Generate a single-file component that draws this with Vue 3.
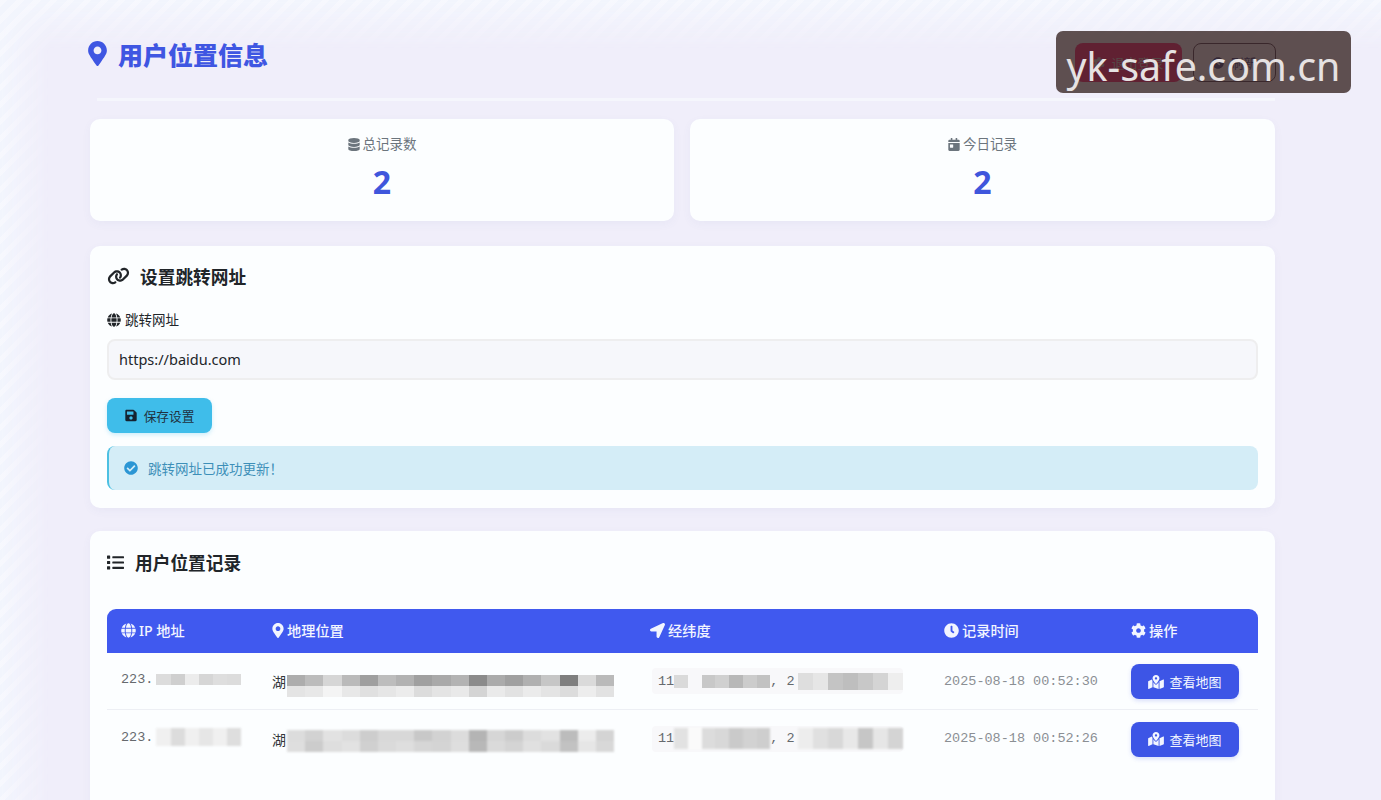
<template>
  <div class="page">
    <div class="container">
      <header class="top">
        <h1 class="title">
          <svg class="title-icon" viewBox="0 0 384 512"><path :d="icons.marker" /></svg>
          用户位置信息
        </h1>
        <div class="top-actions">
          <button class="btn-logout">
            <svg class="top-icon" viewBox="0 0 512 512"><path :d="icons.cog" /></svg>
            退出登录
          </button>
          <button class="btn-refresh">
            <svg class="top-icon" viewBox="0 0 512 512"><path :d="icons.clock" /></svg>
            刷新
          </button>
        </div>
      </header>

      <section class="stats">
        <div v-for="s in stats" :key="s.label" class="stat-card">
          <div class="stat-label">
            <svg class="stat-icon" viewBox="0 0 448 512"><path :d="s.icon" /></svg>
            {{ s.label }}
          </div>
          <div class="stat-value">{{ s.value }}</div>
        </div>
      </section>

      <section class="panel panel-form">
        <h2 class="panel-title">
          <svg class="link-icon" viewBox="0 0 640 512"><path :d="icons.link" /></svg>
          设置跳转网址
        </h2>
        <label class="field-label">
          <svg class="field-icon" viewBox="0 0 496 512"><path :d="icons.globe" /></svg>
          跳转网址
        </label>
        <input class="field-input" type="text" value="https://baidu.com" />
        <button class="btn-save">
          <svg class="save-icon" viewBox="0 0 448 512"><path :d="icons.save" /></svg>
          保存设置
        </button>
        <div class="notice">
          <svg class="notice-icon" viewBox="0 0 512 512"><path :d="icons.check" /></svg>
          跳转网址已成功更新！
        </div>
      </section>

      <section class="panel panel-table">
        <h2 class="panel-title list-title">
          <svg class="list-icon" viewBox="0 0 512 512"><path :d="icons.list" /></svg>
          用户位置记录
        </h2>
        <div class="table">
          <div class="row head">
            <div v-for="h in heads" :key="h.text" class="cell">
              <svg class="head-icon" :viewBox="h.box"><path :d="h.icon" /></svg>
              {{ h.text }}
            </div>
          </div>
          <div v-for="(r, i) in rows" :key="r.time" class="row body-row" :class="{ last: i === rows.length - 1 }">
            <div class="cell mono ip">
              <span>223.</span>
              <span class="mosaic mosaic-ip" :class="{ soft: i === 1 }">
                <i v-for="(c, j) in r.ip" :key="j" :style="{ background: c }"></i>
              </span>
            </div>
            <div class="cell place">
              <span>湖</span>
              <span class="mosaic mosaic-place" :class="{ soft: i === 1 }">
                <span class="mosaic-line">
                  <i v-for="(c, j) in r.place" :key="j" :style="{ background: c }"></i>
                </span>
                <span class="mosaic-line">
                  <i v-for="(c, j) in r.place2" :key="j" :style="{ background: c }"></i>
                </span>
              </span>
            </div>
            <div class="cell">
              <span class="coord mono">
                <span>11</span>
                <span class="mosaic mosaic-lng" :class="{ soft: i === 1 }">
                  <i v-for="(c, j) in r.lng" :key="j" :style="{ background: c }"></i>
                </span>
                <span class="coord-sep">, 2</span>
                <span class="mosaic mosaic-lat" :class="{ soft: i === 1 }">
                  <i v-for="(c, j) in r.lat" :key="j" :style="{ background: c }"></i>
                </span>
              </span>
            </div>
            <div class="cell mono time">{{ r.time }}</div>
            <div class="cell">
              <button class="btn-map">
                <svg class="map-icon" viewBox="0 0 576 512"><path :d="icons.map" /></svg>
                查看地图
              </button>
            </div>
          </div>
        </div>
      </section>
    </div>

    <div class="watermark">yk-safe.com.cn</div>
  </div>
</template>

<script setup>
const icons = {
  marker: 'M172.268 501.67C26.97 291.031 0 255.726 0 192 0 85.961 85.961 0 192 0s192 85.961 192 192c0 63.726-26.97 99.031-172.268 309.67-9.535 13.774-29.93 13.773-39.464 0zM192 272c44.183 0 80-35.817 80-80s-35.817-80-80-80-80 35.817-80 80 35.817 80 80 80z',
  database: 'M448 73.143v45.714C448 159.143 347.667 192 224 192S0 159.143 0 118.857V73.143C0 32.857 100.333 0 224 0s224 32.857 224 73.143zM448 176v102.857C448 319.143 347.667 352 224 352S0 319.143 0 278.857V176c48.125 33.143 136.208 48.572 224 48.572S399.874 209.143 448 176zm0 160v102.857C448 479.143 347.667 512 224 512S0 479.143 0 438.857V336c48.125 33.143 136.208 48.572 224 48.572S399.874 369.143 448 336z',
  calendar: 'M0 464c0 26.5 21.5 48 48 48h352c26.5 0 48-21.5 48-48V192H0v272zm64-192c0-8.8 7.2-16 16-16h96c8.8 0 16 7.2 16 16v96c0 8.8-7.2 16-16 16H80c-8.8 0-16-7.2-16-16v-96zM400 64h-48V16c0-8.8-7.2-16-16-16h-32c-8.8 0-16 7.2-16 16v48H160V16c0-8.8-7.2-16-16-16h-32c-8.8 0-16 7.2-16 16v48H48C21.5 64 0 85.5 0 112v48h448v-48c0-26.5-21.5-48-48-48z',
  link: 'M579.8 267.7c56.5-56.5 56.5-148 0-204.5c-50-50-128.8-56.5-186.3-15.4l-1.6 1.1c-14.4 10.3-17.7 30.3-7.4 44.6s30.3 17.7 44.6 7.4l1.6-1.1c32.1-22.9 76-19.3 103.8 8.6c31.5 31.5 31.5 82.5 0 114L422.3 334.8c-31.5 31.5-82.5 31.5-114 0c-27.9-27.9-31.5-71.8-8.6-103.8l1.1-1.6c10.3-14.4 6.9-34.4-7.4-44.6s-34.4-6.9-44.6 7.4l-1.1 1.6C206.5 251.2 213 330 263 380c56.5 56.5 148 56.5 204.5 0L579.8 267.7zM60.2 244.3c-56.5 56.5-56.5 148 0 204.5c50 50 128.8 56.5 186.3 15.4l1.6-1.1c14.4-10.3 17.7-30.3 7.4-44.6s-30.3-17.7-44.6-7.4l-1.6 1.1c-32.1 22.9-76 19.3-103.8-8.6C74 372 74 321 105.5 289.5L217.7 177.2c31.5-31.5 82.5-31.5 114 0c27.9 27.9 31.5 71.8 8.6 103.9l-1.1 1.6c-10.3 14.4-6.9 34.4 7.4 44.6s34.4 6.9 44.6-7.4l1.1-1.6C433.5 260.8 427 182 377 132c-56.5-56.5-148-56.5-204.5 0L60.2 244.3z',
  globe: 'M336.5 160C322 70.7 287.8 8 248 8s-74 62.7-88.5 152h177zM152 256c0 22.2 1.2 43.5 3.3 64h185.3c2.1-20.5 3.3-41.8 3.3-64s-1.2-43.5-3.3-64H155.3c-2.1 20.5-3.3 41.8-3.3 64zm324.7-96c-28.6-67.9-86.5-120.4-158-141.6 24.4 33.8 41.2 84.7 50 141.6h108zM177.2 18.4C105.8 39.6 47.8 92.1 19.3 160h108c8.7-56.9 25.5-107.8 49.9-141.6zM487.4 192H372.7c2.1 21 3.3 42.5 3.3 64s-1.2 43-3.3 64h114.6c5.5-20.5 8.6-41.8 8.6-64s-3.1-43.5-8.5-64zM120 256c0-21.5 1.2-43 3.3-64H8.6C3.2 212.5 0 233.8 0 256s3.2 43.5 8.6 64h114.6c-2-21-3.2-42.5-3.2-64zm39.5 96c14.5 89.3 48.7 152 88.5 152s74-62.7 88.5-152h-177zm159.3 141.6c71.4-21.2 129.4-73.7 158-141.6h-108c-8.8 56.9-25.6 107.8-50 141.6zM19.3 352c28.6 67.9 86.5 120.4 158 141.6-24.4-33.8-41.2-84.7-50-141.6h-108z',
  save: 'M433.941 129.941l-83.882-83.882A48 48 0 0 0 316.118 32H48C21.49 32 0 53.49 0 80v352c0 26.51 21.49 48 48 48h352c26.51 0 48-21.49 48-48V163.882a48 48 0 0 0-14.059-33.941zM224 416c-35.346 0-64-28.654-64-64 0-35.346 28.654-64 64-64s64 28.654 64 64c0 35.346-28.654 64-64 64zm96-304.52V212c0 6.627-5.373 12-12 12H76c-6.627 0-12-5.373-12-12V108c0-6.627 5.373-12 12-12h228.52c3.183 0 6.235 1.264 8.485 3.515l3.48 3.48A11.996 11.996 0 0 1 320 111.48z',
  check: 'M504 256c0 136.967-111.033 248-248 248S8 392.967 8 256 119.033 8 256 8s248 111.033 248 248zM227.314 387.314l184-184c6.248-6.248 6.248-16.379 0-22.627l-22.627-22.627c-6.248-6.249-16.379-6.249-22.628 0L216 308.118l-70.059-70.059c-6.248-6.248-16.379-6.248-22.628 0l-22.627 22.627c-6.248 6.248-6.248 16.379 0 22.627l104 104c6.249 6.249 16.379 6.249 22.628.001z',
  list: 'M80 368H16a16 16 0 0 0-16 16v64a16 16 0 0 0 16 16h64a16 16 0 0 0 16-16v-64a16 16 0 0 0-16-16zm0-320H16A16 16 0 0 0 0 64v64a16 16 0 0 0 16 16h64a16 16 0 0 0 16-16V64a16 16 0 0 0-16-16zm0 160H16a16 16 0 0 0-16 16v64a16 16 0 0 0 16 16h64a16 16 0 0 0 16-16v-64a16 16 0 0 0-16-16zm416 176H176a16 16 0 0 0-16 16v32a16 16 0 0 0 16 16h320a16 16 0 0 0 16-16v-32a16 16 0 0 0-16-16zm0-320H176a16 16 0 0 0-16 16v32a16 16 0 0 0 16 16h320a16 16 0 0 0 16-16V80a16 16 0 0 0-16-16zm0 160H176a16 16 0 0 0-16 16v32a16 16 0 0 0 16 16h320a16 16 0 0 0 16-16v-32a16 16 0 0 0-16-16z',
  arrow: 'M444.52 3.52L28.74 195.42c-47.97 22.39-31.98 92.75 19.19 92.75h175.91v175.91c0 51.17 70.36 67.17 92.75 19.19l191.9-415.78c15.99-38.39-25.59-79.97-63.97-63.97z',
  clock: 'M256,8C119,8,8,119,8,256S119,504,256,504,504,393,504,256,393,8,256,8Zm92.49,313h0l-20,25a16,16,0,0,1-22.49,2.5h0l-67-49.72a40,40,0,0,1-15-31.23V112a16,16,0,0,1,16-16h32a16,16,0,0,1,16,16V256l58,42.5A16,16,0,0,1,348.49,321Z',
  cog: 'M487.4 315.7l-42.6-24.6c4.3-23.2 4.3-47 0-70.2l42.6-24.6c4.9-2.8 7.1-8.6 5.5-14-11.1-35.6-30-67.8-54.7-94.6-3.8-4.1-10-5.1-14.8-2.3L380.8 110c-17.9-15.4-38.5-27.3-60.8-35.1V25.8c0-5.6-3.9-10.5-9.4-11.7-36.7-8.2-74.3-7.8-109.2 0-5.5 1.2-9.4 6.1-9.4 11.7V75c-22.2 7.9-42.8 19.8-60.8 35.1L88.7 85.5c-4.9-2.8-11-1.9-14.8 2.3-24.7 26.7-43.6 58.9-54.7 94.6-1.7 5.4.6 11.2 5.5 14L67.3 221c-4.3 23.2-4.3 47 0 70.2l-42.6 24.6c-4.9 2.8-7.1 8.6-5.5 14 11.1 35.6 30 67.8 54.7 94.6 3.8 4.1 10 5.1 14.8 2.3l42.6-24.6c17.9 15.4 38.5 27.3 60.8 35.1v49.2c0 5.6 3.9 10.5 9.4 11.7 36.7 8.2 74.3 7.8 109.2 0 5.5-1.2 9.4-6.1 9.4-11.7v-49.2c22.2-7.9 42.8-19.8 60.8-35.1l42.6 24.6c4.9 2.8 11 1.9 14.8-2.3 24.7-26.7 43.6-58.9 54.7-94.6 1.5-5.5-.7-11.3-5.6-14.1zM256 336c-44.1 0-80-35.9-80-80s35.9-80 80-80 80 35.9 80 80-35.9 80-80 80z',
  map: 'M288 0c-69.59 0-126 56.41-126 126 0 56.26 82.35 158.8 113.9 196.02 6.39 7.54 17.82 7.54 24.2 0C331.65 284.8 414 182.26 414 126 414 56.41 357.59 0 288 0zm0 168c-23.2 0-42-18.8-42-42s18.8-42 42-42 42 18.8 42 42-18.8 42-42 42zM20.12 215.95A32.006 32.006 0 0 0 0 245.66v250.32c0 11.32 11.43 19.06 21.94 14.86L160 448V214.92c-8.84-15.98-16.07-31.54-21.25-46.42L20.12 215.95zM288 359.67c-14.07 0-27.38-6.18-36.51-16.96-19.66-23.2-40.57-49.62-59.49-76.72V448l192 64V266c-18.92 27.09-39.82 53.52-59.49 76.72-9.13 10.77-22.44 16.95-36.51 16.95zm266.06-198.51L416 224v288l139.88-55.95A31.996 31.996 0 0 0 576 426.34V176.02c0-11.32-11.43-19.06-21.94-14.86z',
}

const stats = [
  { label: '总记录数', value: 2, icon: icons.database },
  { label: '今日记录', value: 2, icon: icons.calendar },
]

const heads = [
  { text: 'IP 地址', icon: icons.globe, box: '0 0 496 512' },
  { text: '地理位置', icon: icons.marker, box: '0 0 384 512' },
  { text: '经纬度', icon: icons.arrow, box: '0 0 512 512' },
  { text: '记录时间', icon: icons.clock, box: '0 0 512 512' },
  { text: '操作', icon: icons.cog, box: '0 0 512 512' },
]

// mosaic cells stand in for the blurred-out personal data
const rows = [
  {
    time: '2025-08-18 00:52:30',
    ip: ['#dcdcdc', '#cfcfcf', '#ececec', '#d6d6d6', '#dedede', '#dcdcdc'],
    place: ['#adadad', '#bcbcbc', '#d6d6d6', '#bababa', '#9f9f9f', '#bdbdbd', '#b2b2b2', '#a0a0a0', '#a9a9a9', '#b3b3b3', '#8b8b8b', '#ababab', '#a0a0a0', '#b0b0b0', '#c6c6c6', '#7f7f7f', '#dadada', '#bababa'],
    place2: ['#e4e4e4', '#e8e8e8', '#f4f4f4', '#e8e8e8', '#e0e0e0', '#e6e6e6', '#ececec', '#dcdcdc', '#e4e4e4', '#e9e9e9', '#d4d4d4', '#eaeaea', '#e2e2e2', '#ebebeb', '#e4e4e4', '#dcdcdc', '#ededed', '#e2e2e2'],
    lng: ['#dadada', '#f8f8fa', '#c8c8c8', '#d0d0d0', '#b8b8b8', '#cccccc', '#c2c2c2'],
    lat: ['#dedede', '#e6e6e6', '#c4c4c4', '#bebebe', '#c8c8c8', '#d4d4d4', '#eeeeee'],
  },
  {
    time: '2025-08-18 00:52:26',
    ip: ['#f0f0f0', '#dcdcdc', '#f0f0f0', '#e6e6e6', '#f0f0f0', '#dedede'],
    place: ['#dcdcdc', '#d2d2d2', '#e2e2e2', '#dcdcdc', '#cdcdcd', '#d8d8d8', '#d8d8d8', '#c8c8c8', '#d2d2d2', '#dcdcdc', '#b4b4b4', '#d6d6d6', '#cccccc', '#dcdcdc', '#e2e2e2', '#bcbcbc', '#ececec', '#d4d4d4'],
    place2: ['#dedede', '#cccccc', '#dedede', '#e2e2e2', '#d0d0d0', '#dadada', '#dedede', '#d6d6d6', '#d4d4d4', '#dedede', '#b8b8b8', '#dadada', '#d4d4d4', '#e0e0e0', '#dadada', '#c2c2c2', '#e6e6e6', '#d8d8d8'],
    lng: ['#e2e2e2', '#fafafa', '#dcdcdc', '#d8d8d8', '#cacaca', '#d2d2d2', '#cecece'],
    lat: ['#ededed', '#e0e0e0', '#d8d8d8', '#e8e8e8', '#c6c6c6', '#e6e6e6', '#d4d4d4'],
  },
]
</script>

<style>
html,
body {
  margin: 0;
  overflow: hidden;
}
</style>

<style scoped>
.page {
  position: relative;
  isolation: isolate;
  height: 800px;
  overflow: hidden;
  font-family: "Noto Sans", "Noto Sans CJK SC", sans-serif;
  color: #212529;
  background-color: #f0eefa;
}

/* faint stripes that fade out from the top and left edges */
.page::before {
  content: "";
  position: absolute;
  inset: 0;
  z-index: -1;
  background-color: #f2f5fd;
  background-image: repeating-linear-gradient(135deg, rgba(255, 255, 255, 0.35) 0 5px, transparent 5px 12px);
  -webkit-mask-image: linear-gradient(to right, #000, transparent 50px), linear-gradient(to bottom, #000, transparent 50px);
  mask-image: linear-gradient(to right, #000, transparent 50px), linear-gradient(to bottom, #000, transparent 50px);
}

.container {
  width: 1185px;
  margin-left: 90px;
}

.top {
  height: 101px;
  box-sizing: border-box;
  padding-top: 39px;
  display: flex;
  justify-content: space-between;
  align-items: flex-start;
  margin-bottom: 18px;
  background: linear-gradient(#f5f6fc, #f5f6fc) no-repeat 7px 100% / 100% 3px;
}

.title {
  margin: 0 0 0 -2px;
  display: flex;
  align-items: center;
  gap: 11px;
  font-size: 25px;
  font-weight: 900;
  line-height: 32px;
  color: #3f56e2;
}

.title-icon {
  width: 19px;
  height: 25px;
  fill: #3f56e2;
  margin-top: -3px;
}

.top-actions {
  display: flex;
  gap: 11px;
  margin-top: 4px;
  margin-right: -1px;
}

.btn-logout,
.btn-refresh {
  display: flex;
  align-items: center;
  justify-content: center;
  gap: 6px;
  height: 39px;
  font-family: inherit;
  font-size: 13px;
  border-radius: 8px;
}

.top-icon {
  width: 12px;
  height: 12px;
  fill: currentColor;
}

.btn-logout {
  width: 107px;
  border: none;
  background: #f70a66;
  color: #c8c8c8;
}

.btn-refresh {
  width: 83px;
  background: transparent;
  border: 1px solid #3a2c40;
  color: #1f2a70;
}

.stats {
  display: grid;
  grid-template-columns: 584px 585px;
  gap: 16px;
  margin-bottom: 25px;
}

.stat-card {
  height: 102px;
  box-sizing: border-box;
  padding-top: 15px;
  background: #fcfeff;
  border-radius: 10px;
  box-shadow: 0 3px 10px rgba(80, 90, 160, 0.05);
  text-align: center;
}

.stat-label {
  display: flex;
  justify-content: center;
  align-items: center;
  gap: 3px;
  font-size: 13.5px;
  line-height: 20px;
  color: #6c757d;
}

.stat-icon {
  width: 12px;
  height: 13px;
  fill: #6c757d;
}

.stat-value {
  margin-top: 9px;
  font-size: 32px;
  font-weight: 700;
  line-height: 38px;
  color: #3f56dc;
}

.panel {
  background: #fcfeff;
  border-radius: 10px;
  box-shadow: 0 3px 10px rgba(80, 90, 160, 0.05);
  padding: 0 17px;
}

.panel-form {
  height: 262px;
  box-sizing: border-box;
  padding-top: 19px;
  margin-bottom: 23px;
}

.panel-title {
  margin: 0;
  display: flex;
  align-items: center;
  font-size: 17.7px;
  font-weight: 700;
  line-height: 25px;
  color: #212529;
}

.link-icon {
  width: 23px;
  height: 18px;
  fill: #212529;
  margin-right: 10px;
  margin-top: -3px;
}

.field-label {
  display: flex;
  align-items: center;
  gap: 4px;
  margin-top: 20px;
  font-size: 13.5px;
  line-height: 20px;
}

.field-icon {
  width: 14px;
  height: 14px;
  fill: #212529;
}

.field-input {
  display: block;
  box-sizing: border-box;
  width: 100%;
  height: 41px;
  margin-top: 9px;
  padding: 0 10px 2px;
  background: #f6f7fb;
  border: 2px solid #eeeeef;
  border-radius: 8px;
  font-family: inherit;
  font-size: 14.5px;
  color: #212529;
}

.btn-save {
  display: flex;
  align-items: center;
  justify-content: center;
  gap: 7px;
  width: 105px;
  height: 35px;
  margin-top: 18px;
  border: none;
  border-radius: 8px;
  background: #3fbdea;
  box-shadow: 0 2px 4px rgba(63, 189, 234, 0.25);
  font-family: inherit;
  font-size: 12.7px;
  color: #1f3140;
}

.save-icon {
  width: 12px;
  height: 13px;
  fill: #152230;
}

.notice {
  display: flex;
  align-items: center;
  box-sizing: border-box;
  height: 44px;
  margin-top: 13px;
  padding-left: 15px;
  background: #d4edf7;
  border-left: 2px solid #4cc0e2;
  border-radius: 8px;
  font-size: 13.5px;
  color: #3d8fb8;
}

.notice-icon {
  width: 14px;
  height: 14px;
  margin-right: 10px;
  fill: #2c96d4;
}

.panel-table {
  height: 300px;
  box-sizing: border-box;
  padding-top: 20px;
}

.list-icon {
  width: 17px;
  height: 17px;
  fill: #212529;
  margin-right: 11px;
  margin-top: -3px;
}

.table {
  margin-top: 33px;
}

.row {
  display: grid;
  grid-template-columns: 151px 378px 294px 187px 1fr;
  align-items: center;
}

.head {
  height: 44px;
  padding-left: 14px;
  background: #4059ef;
  border-radius: 9px 9px 0 0;
  color: #f2f5ff;
  font-size: 14.2px;
  font-weight: 500;
}

.head .cell {
  display: flex;
  align-items: center;
  gap: 3px;
  margin-top: -2px;
}

.head-icon {
  width: 15px;
  height: 15px;
  fill: #f2f5ff;
}

.head .cell:nth-child(2) .head-icon {
  width: 12px;
}

.body-row {
  height: 57px;
  padding-left: 14px;
  border-bottom: 1px solid #edeff4;
  box-sizing: border-box;
}

.body-row.last {
  border-bottom: none;
}

.mono {
  font-family: "Liberation Mono", monospace;
  font-size: 13.5px;
  color: #666a6e;
}

.ip {
  display: flex;
  align-items: center;
  margin-top: -3px;
}

.place {
  display: flex;
  align-items: center;
  font-size: 14px;
  color: #33363a;
}

.mosaic {
  display: inline-flex;
  flex-shrink: 0;
}

.mosaic i {
  display: block;
  flex: 1;
}

.mosaic.soft {
  filter: blur(0.8px);
}

.mosaic-ip {
  width: 85px;
  height: 11px;
  margin-left: 3px;
}

.mosaic-ip.soft {
  height: 18px;
}

.mosaic-place {
  flex-direction: column;
  width: 327px;
  margin-left: 1px;
  margin-top: 10px;
}

.mosaic-place.soft {
  margin-top: 4px;
}

.mosaic-line {
  display: flex;
  height: 11px;
}

.coord {
  display: inline-flex;
  align-items: center;
  box-sizing: border-box;
  width: 251px;
  height: 26px;
  padding-left: 6px;
  margin-left: 2px;
  background: #f8f8fa;
  border-radius: 4px;
  font-size: 13.5px;
}

.coord-sep {
  white-space: pre;
}

.mosaic-lng {
  width: 96px;
  height: 13px;
}

.mosaic-lat {
  width: 105px;
  height: 17px;
  margin-left: 3px;
}

.mosaic-lng.soft,
.mosaic-lat.soft {
  height: 21px;
}

.time {
  font-size: 13.5px;
  color: #8b8f94;
  white-space: nowrap;
}

.btn-map {
  display: flex;
  align-items: center;
  justify-content: center;
  gap: 5px;
  width: 108px;
  height: 35px;
  margin-top: 1px;
  border: none;
  border-radius: 8px;
  background: #3d55e6;
  box-shadow: 0 2px 4px rgba(61, 85, 230, 0.18);
  font-family: inherit;
  font-size: 13px;
  color: #f2f5ff;
}

.map-icon {
  width: 16px;
  height: 14px;
  fill: #f2f5ff;
}

.watermark {
  position: absolute;
  left: 1056px;
  top: 31px;
  width: 295px;
  height: 62px;
  border-radius: 7px;
  background: rgba(57, 39, 37, 0.8);
  color: #e6e2e2;
  font-family: "Noto Sans", sans-serif;
  font-size: 39.3px;
  line-height: 70px;
  text-align: center;
  white-space: nowrap;
}
</style>
